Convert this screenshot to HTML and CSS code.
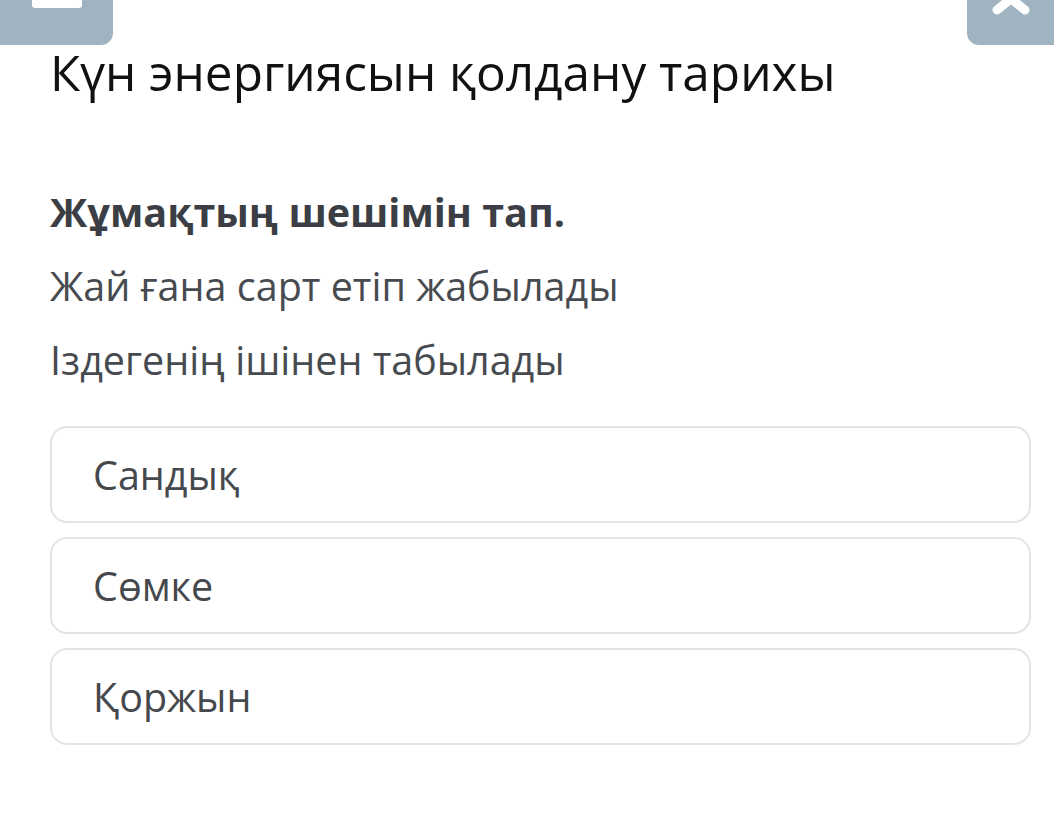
FILE: index.html
```html
<!DOCTYPE html>
<html lang="kk">
<head>
    <meta charset="UTF-8">
    <meta name="viewport" content="width=device-width, initial-scale=1.0">
    <title>Күн энергиясын қолдану тарихы</title>
    <link rel="stylesheet" href="styles.css">
</head>
<body>
    <div class="topbar">
        <button class="top-btn menu-btn" aria-label="Мәзір">
            <span class="menu-line"></span>
        </button>
        <button class="top-btn close-btn" aria-label="Жабу">
            <svg width="44" height="24" viewBox="0 0 44 24">
                <path d="M6 -14 L36 10 M38 -14 L8 10" stroke="#ffffff" stroke-width="9" stroke-linecap="round" fill="none"/>
            </svg>
        </button>
    </div>
    <div class="content">
        <h1 class="title">Күн энергиясын қолдану тарихы</h1>
        <div class="question">
            <p class="task">Жұмақтың шешімін тап.</p>
            <p class="line">Жай ғана сарт етіп жабылады</p>
            <p class="line">Іздегенің ішінен табылады</p>
        </div>
        <div class="options">
            <div class="option">Сандық</div>
            <div class="option">Сөмке</div>
            <div class="option">Қоржын</div>
        </div>
    </div>
</body>
</html>
```

FILE: styles.css
```css
body {
    font-family: "Open Sans", "Noto Sans", sans-serif;
    margin: 0;
    background: #ffffff;
}
.topbar {
    display: flex;
    justify-content: space-between;
    height: 45px;
}
.top-btn {
    border: none;
    padding: 0;
    background-color: #9fb3c0;
    height: 45px;
    display: flex;
    justify-content: center;
    align-items: flex-start;
    overflow: hidden;
}
.menu-btn {
    width: 113px;
    border-radius: 0 0 12px 0;
}
.menu-line {
    display: block;
    width: 50px;
    height: 8px;
    background: #ffffff;
    border-radius: 0 0 3px 3px;
}
.close-btn {
    width: 87px;
    border-radius: 0 0 0 12px;
}
.content {
    padding: 0 23px 0 50px;
}
.title {
    margin: 0;
    font-size: 49.5px;
    font-weight: 400;
    color: #111111;
    line-height: 54px;
}
.question {
    margin-top: 87px;
}
.task {
    margin: 0;
    font-size: 39.5px;
    font-weight: 700;
    color: #3b3f45;
    line-height: 52px;
}
.line {
    margin: 22px 0 0;
    font-size: 39.5px;
    color: #474b50;
    line-height: 52px;
}
.options {
    margin-top: 40px;
    display: flex;
    flex-direction: column;
    gap: 14px;
}
.option {
    height: 93px;
    border: 2px solid #e4e4e4;
    border-radius: 17px;
    padding-left: 41px;
    display: flex;
    align-items: center;
    font-size: 39.5px;
    color: #45484c;
}
```
